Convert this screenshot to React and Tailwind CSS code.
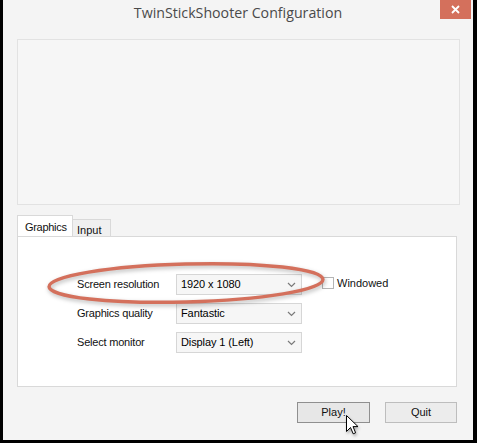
import React from "react";

function Chevron() {
  return (
    <svg width="9" height="6" viewBox="0 0 9 6" className="shrink-0">
      <path d="M1 1 L4.5 4.5 L8 1" fill="none" stroke="#7a7a7a" strokeWidth="1.2" />
    </svg>
  );
}

function Select({ value }) {
  return (
    <div className="flex h-[21px] w-[126px] items-center justify-between border border-[#d6d6d6] bg-[#f6f6f6] pl-[4px] pr-[5px] text-[11px] tracking-[-0.1px] text-black">
      <span>{value}</span>
      <Chevron />
    </div>
  );
}

function Row({ label, value, children }) {
  return (
    <div className="flex h-[21px] items-center">
      <div className="w-[99px] text-[11px] tracking-[-0.2px] text-[#111]">{label}</div>
      <Select value={value} />
      {children}
    </div>
  );
}

export default function App() {
  return (
    <div
      className="relative h-[443px] w-[477px] overflow-hidden bg-black pb-[3px] pl-[3px] pr-[4px]"
      style={{ fontFamily: '"Liberation Sans", Arial, sans-serif' }}
    >
      <div className="flex h-full flex-col bg-[#f4f4f4]">
        {/* Title bar */}
        <div className="grid h-[39px] grid-cols-[1fr_auto_1fr] items-start">
          <div />
          <div
            className="pt-[3px] text-[14.2px] leading-[20px] text-[#4a4a4a]"
            style={{ fontFamily: '"Open Sans", "Noto Sans", sans-serif' }}
          >
            TwinStickShooter Configuration
          </div>
          <div className="flex justify-end pr-[2px]">
            <div className="flex h-[19px] w-[31px] items-center justify-center bg-[#d4705c]">
              <svg width="9" height="9" viewBox="0 0 9 9">
                <path d="M1 1 L8 8 M8 1 L1 8" stroke="white" strokeWidth="1.8" />
              </svg>
            </div>
          </div>
        </div>

        {/* Banner */}
        <div className="ml-[14px] h-[166px] w-[443px] border border-[#e2e2e2] bg-[#f6f6f6]" />

        {/* Tabs */}
        <div className="ml-[14px] mt-[11px] flex h-[20px] items-end">
          <div className="relative z-10 flex h-[21px] w-[56px] items-start border border-b-0 border-[#d9d9d9] bg-white pl-[7px] pt-[3px] text-[11px] tracking-[-0.3px] text-[#111]">
            Graphics
          </div>
          <div className="flex h-[17px] w-[38px] items-start border border-b-0 border-l-0 border-[#d9d9d9] bg-[#f0f0f0] pl-[4px] pt-[2px] text-[11px] text-[#111]">
            Input
          </div>
        </div>

        {/* Tab panel */}
        <div className="ml-[14px] flex h-[151px] w-[440px] flex-col gap-[8px] border border-[#d9d9d9] bg-white pl-[59px] pt-[37px]">
          <Row label="Screen resolution" value="1920 x 1080">
            <div className="ml-[20px] flex items-center gap-[3px] self-start pt-[1px]">
              <div className="h-[12px] w-[12px] border border-[#b5b5b5] bg-white" />
              <span className="text-[11px] text-[#111]">Windowed</span>
            </div>
          </Row>
          <Row label="Graphics quality" value="Fantastic" />
          <Row label="Select monitor" value="Display 1 (Left)" />
        </div>

        {/* Buttons */}
        <div className="ml-[14px] mt-[15px] flex w-[440px] justify-end gap-[15px]">
          <div className="flex h-[21px] w-[73px] items-center justify-center border border-[#8f8f8f] bg-[#e7e7e7] text-[11px] text-[#111]">
            Play!
          </div>
          <div className="flex h-[21px] w-[72px] items-center justify-center border border-[#bdbdbd] bg-[#ececec] text-[11px] text-[#111]">
            Quit
          </div>
        </div>
      </div>

      {/* Red hand-drawn ellipse */}
      <svg
        className="pointer-events-none absolute left-[40px] top-[254px]"
        width="295"
        height="58"
        viewBox="0 0 295 58"
        style={{ filter: "drop-shadow(1px 2px 2px rgba(0,0,0,0.28))" }}
      >
        <ellipse
          cx="146"
          cy="29"
          rx="137"
          ry="19"
          fill="none"
          stroke="#d4705c"
          strokeWidth="3.5"
          transform="rotate(-1.5 146 29)"
        />
      </svg>

      {/* Mouse cursor */}
      <svg
        className="pointer-events-none absolute left-[346px] top-[415px]"
        width="14"
        height="22"
        viewBox="0 0 14 22"
        style={{ filter: "drop-shadow(1px 2px 1.5px rgba(0,0,0,0.3))" }}
      >
        <path
          d="M0.5 0.5 L0.5 16.5 L4.5 12.5 L7.2 18.8 L9.6 17.8 L7 11.6 L12 11.6 Z"
          fill="white"
          stroke="black"
          strokeWidth="1"
          strokeLinejoin="miter"
        />
      </svg>
    </div>
  );
}
